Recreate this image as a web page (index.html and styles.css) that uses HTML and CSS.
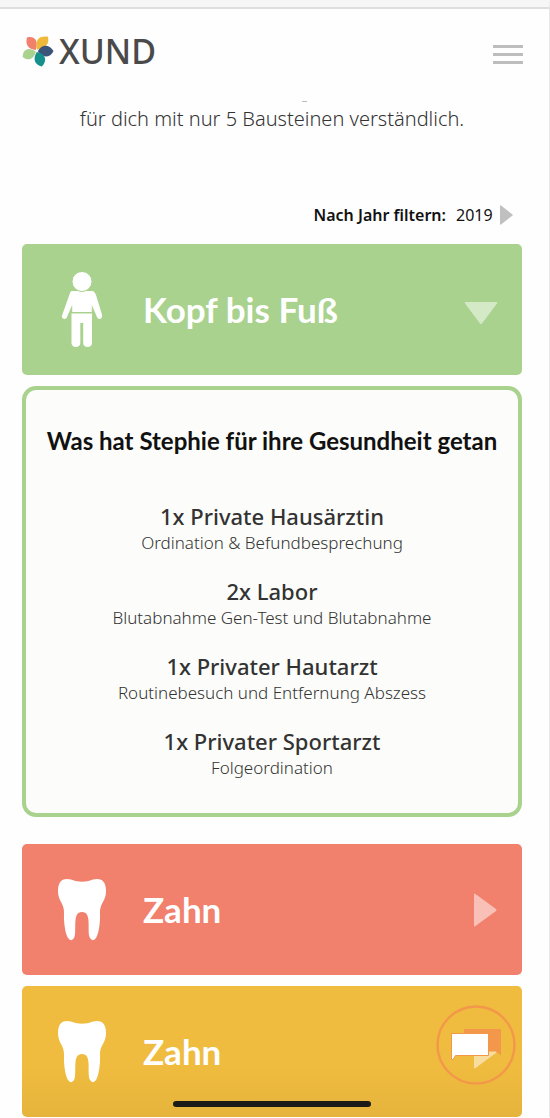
FILE: index.html
```html
<!DOCTYPE html>
<html lang="de">
<head>
<meta charset="utf-8">
<meta name="viewport" content="width=device-width, initial-scale=1">
<title>XUND</title>
<link rel="stylesheet" href="styles.css">
</head>
<body>
<header class="header">
  <a class="logo" href="#">
    <svg class="logo-mark" viewBox="0 0 30 30" aria-hidden="true">
      <path fill="#f1806d" d="M12.800 14C5 13.500 2 8 4 1.500C12 -.5 15.500 5 12.800 14Z"/>
      <path fill="#efba3c" d="M14 13.500C11.500 4 16 -.5 25 .8C26.500 8 22.500 13 14 13.500Z"/>
      <path fill="#3b5479" d="M14.800 15.300C19 8 26 8 30.500 15C27 22.500 19 22 14.800 15.300Z"/>
      <path fill="#16908c" d="M13.800 16C22 17.500 25 23.500 19 30.500C11.500 29 9.500 23 13.800 16Z"/>
      <path fill="#a8d28d" d="M12.800 15.500C11 23.500 5 25.500 -.3 21C-.3 13 6 10.500 12.800 15.500Z"/>
    </svg>
    <span class="logo-text">XUND</span>
  </a>
  <button class="menu" type="button" aria-label="Menü"><span></span><span></span><span></span></button>
</header>

<main class="content">
  <p class="intro">für dich mit nur 5 Bausteinen verständlich.</p>

  <div class="filter">
    <label for="year">Nach Jahr filtern:</label>
    <select id="year" class="year"><option>2019</option></select>
    <svg class="filter-arrow" viewBox="0 0 13 20" aria-hidden="true"><path d="M0 1Q0 0 1 .5L12.500 9.500Q13 10 12.500 10.500L1 19.500Q0 20 0 19Z"/></svg>
  </div>

  <section class="block">
    <button class="card card-green" type="button" aria-expanded="true">
      <svg class="card-icon" viewBox="0 0 48 76" aria-hidden="true">
        <path d="M14 19H34C36 19 37 21 38 23L43.800 42C44.500 44.500 44 46 42.500 46.800C41 47.500 39.500 46.500 39 45L33.800 33V40H14.200V33L9 45C8.500 46.500 7 47.500 5.500 46.800C4 46 3.500 44.500 4.200 43L12 21Q12.500 19 14 19Z"/>
        <circle cx="24" cy="9.500" r="10" class="head"/>
        <path d="M13.500 41.500H34V71C34 73.500 32 75 29.600 75S25.200 73.500 25.200 71V51H22.300V71C22.300 73.500 20.300 75 17.900 75S13.500 73.500 13.500 71Z"/>
      </svg>
      <span class="card-title">Kopf bis Fuß</span>
      <svg class="arrow" viewBox="0 0 34 34" aria-hidden="true"><path d="M1.500 9H32.500Q34 9 33 10.500L18 30.500Q17 32 16 30.500L1 10.500Q0 9 1.500 9Z"/></svg>
    </button>
    <div class="panel">
      <h2 class="panel-title">Was hat Stephie für ihre Gesundheit getan</h2>
      <ul class="visits">
        <li><h3>1x Private Hausärztin</h3><p>Ordination &amp; Befundbesprechung</p></li>
        <li><h3>2x Labor</h3><p>Blutabnahme Gen-Test und Blutabnahme</p></li>
        <li><h3>1x Privater Hautarzt</h3><p>Routinebesuch und Entfernung Abszess</p></li>
        <li><h3>1x Privater Sportarzt</h3><p>Folgeordination</p></li>
      </ul>
    </div>
  </section>

  <button class="card card-red" type="button" aria-expanded="false">
    <svg class="card-icon" viewBox="0 0 48 76" aria-hidden="true"><path d="M0 19C0 7 7 6 13 7.500C21 10.500 27 10.500 35 7.500C41 6 48 7 48 19C48 29 42 31 42 40C42.500 53 40 63 38 66Q34 71 31.500 65C29 57 34 40 24 40S19 57 16.500 65Q14 71 10 66C8 63 5.500 53 6 40C6 31 0 29 0 19Z"/></svg>
    <span class="card-title">Zahn</span>
    <svg class="arrow" viewBox="0 0 34 34" aria-hidden="true"><path d="M10 1.500Q10 0 11.500 1L32 16Q33 17 32 18L11.500 33Q10 34 10 32.500Z"/></svg>
  </button>
  <button class="card card-yellow" type="button" aria-expanded="false">
    <svg class="card-icon" viewBox="0 0 48 76" aria-hidden="true"><path d="M0 19C0 7 7 6 13 7.500C21 10.500 27 10.500 35 7.500C41 6 48 7 48 19C48 29 42 31 42 40C42.500 53 40 63 38 66Q34 71 31.500 65C29 57 34 40 24 40S19 57 16.500 65Q14 71 10 66C8 63 5.500 53 6 40C6 31 0 29 0 19Z"/></svg>
    <span class="card-title">Zahn</span>
    <svg class="arrow" viewBox="0 0 34 34" aria-hidden="true"><path d="M10 1.500Q10 0 11.500 1L32 16Q33 17 32 18L11.500 33Q10 34 10 32.500Z"/></svg>
  </button>
</main>

<button class="chat" type="button" aria-label="Chat öffnen">
  <svg viewBox="0 0 80 80" aria-hidden="true">
    <circle cx="40" cy="40" r="38.500" fill="none" stroke="#f3974a" stroke-width="2.400"/>
    <path fill="#f3974a" d="M28 24H65V50.500L60 46.500H28Z"/>
    <path fill="#fff" stroke="#f3974a" d="M15.500 28.500H52.500V50.500H19.500L17 54.500H15.500Z"/>
  </svg>
</button>
<div class="home-indicator"></div>
</body>
</html>
```
FILE: styles.css
```css
* { box-sizing: border-box; }
body {
  margin: 0;
  background: #fefefe;
  border-top: 7px solid #f6f6f6;
  border-right: 1px solid #e8e8e8;
  color: #333;
  font-family: "Noto Sans", "Open Sans", sans-serif;
}
h2, h3, p, ul { margin: 0; padding: 0; }
button { font: inherit; border: 0; padding: 0; cursor: pointer; }

.header {
  display: flex;
  align-items: center;
  justify-content: space-between;
  height: 92px;
  padding: 0 26px 0 23px;
  border-top: 2px solid #dedede;
}
.logo {
  display: flex;
  align-items: center;
  gap: 6px;
  color: #4a4a4a;
  text-decoration: none;
  padding-bottom: 6px;
}
.logo-mark { width: 30px; height: 30px; overflow: visible; }
.logo-text { font-size: 34px; font-weight: 500; line-height: 40px; }
.menu { display: grid; gap: 5px; width: 30px; background: none; }
.menu span { height: 3px; background: #bdbdbd; }

.content { padding: 0 27px 0 22px; }
.intro { padding-top: 2px; text-align: center; font-size: 20px; font-weight: 300; line-height: 28px; }
.intro::before {
  content: "";
  display: block;
  width: 5px;
  height: 1px;
  margin: 0 0 3px 56%;
  background: #bbb;
}

.filter {
  display: flex;
  align-items: center;
  justify-content: flex-end;
  margin: 67px 9px 14px 0;
  height: 30px;
  color: #111;
  font-size: 16px;
}
.filter label { font-weight: 600; margin-right: 10px; }
.year {
  appearance: none;
  border: 0;
  padding: 0;
  margin-right: 7px;
  background: none;
  color: inherit;
  font: inherit;
}
.filter-arrow { width: 13px; height: 20px; fill: #c0c0c0; }

.card {
  display: flex;
  align-items: center;
  width: 100%;
  height: 131px;
  padding: 0 24px 0 36px;
  border-radius: 5px;
  color: #fff;
  text-align: left;
}
.card-green { background: #a8d28d; }
.card-red { background: #f1806d; margin-top: 27px; }
.card-yellow { background: linear-gradient(#efbc3f 60%, #e6b43c); margin-top: 11px; }
.card-icon { width: 48px; height: 76px; fill: #fff; }
.head { stroke: #a8d28d; stroke-width: 1; }
.card-title { flex: 1; margin-left: 37px; padding-bottom: 2px; font-family: Lato, sans-serif; font-size: 35px; font-weight: 700; line-height: 44px; }
.arrow { width: 34px; height: 34px; fill: #fff; fill-opacity: .5; }

.panel {
  margin-top: 11px;
  padding: 35px 12px 33px;
  border: 4px solid #a8d28d;
  border-radius: 14px;
  background: #fcfdfa;
  text-align: center;
}
.panel-title { color: #111; font-family: Lato, sans-serif; font-size: 24px; font-weight: 700; line-height: 32px; }
.visits { display: grid; gap: 22px; margin-top: 45px; list-style: none; }
.visits h3 { font-size: 22px; font-weight: 500; line-height: 28px; }
.visits p { font-size: 17px; font-weight: 300; line-height: 25px; }

.chat {
  position: fixed;
  right: 34px;
  bottom: 33px;
  width: 80px;
  height: 80px;
  border-radius: 50%;
  background: none;
}
.chat svg { display: block; width: 80px; height: 80px; }
.home-indicator {
  position: fixed;
  left: 50%;
  bottom: 11px;
  width: 198px;
  height: 6px;
  margin-left: -102px;
  border-radius: 3px;
  background: #1c1b18;
}
```
